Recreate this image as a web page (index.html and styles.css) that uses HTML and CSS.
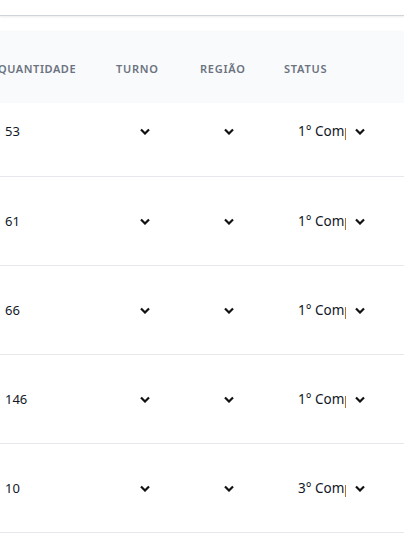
FILE: index.html
```html
<!DOCTYPE html>
<html lang="pt-BR">
<head>
<meta charset="utf-8">
<link rel="stylesheet" href="styles.css">
</head>
<body>
<div class="topcard"></div>
<div class="card">
  <div class="row head">
    <div class="c c1"><span class="h h1">Quantidade</span></div>
    <div class="c c2"><span class="h">Turno</span></div>
    <div class="c c3"><span class="h">Região</span></div>
    <div class="c c4"><span class="h">Status</span></div>
  </div>
  <div class="row first">
    <div class="c c1 num">53</div>
    <div class="c c2"><div class="sel"><span class="val"></span><svg class="chev" viewBox="0 0 10 7"><polyline points="1,1.5 5,5.5 9,1.5"/></svg></div></div>
    <div class="c c3"><div class="sel"><span class="val"></span><svg class="chev" viewBox="0 0 10 7"><polyline points="1,1.5 5,5.5 9,1.5"/></svg></div></div>
    <div class="c c4"><div class="sel"><span class="val wide">1° Compulsório</span><svg class="chev" viewBox="0 0 10 7"><polyline points="1,1.5 5,5.5 9,1.5"/></svg></div></div>
  </div>
  <div class="row">
    <div class="c c1 num">61</div>
    <div class="c c2"><div class="sel"><span class="val"></span><svg class="chev" viewBox="0 0 10 7"><polyline points="1,1.5 5,5.5 9,1.5"/></svg></div></div>
    <div class="c c3"><div class="sel"><span class="val"></span><svg class="chev" viewBox="0 0 10 7"><polyline points="1,1.5 5,5.5 9,1.5"/></svg></div></div>
    <div class="c c4"><div class="sel"><span class="val wide">1° Compulsório</span><svg class="chev" viewBox="0 0 10 7"><polyline points="1,1.5 5,5.5 9,1.5"/></svg></div></div>
  </div>
  <div class="row">
    <div class="c c1 num">66</div>
    <div class="c c2"><div class="sel"><span class="val"></span><svg class="chev" viewBox="0 0 10 7"><polyline points="1,1.5 5,5.5 9,1.5"/></svg></div></div>
    <div class="c c3"><div class="sel"><span class="val"></span><svg class="chev" viewBox="0 0 10 7"><polyline points="1,1.5 5,5.5 9,1.5"/></svg></div></div>
    <div class="c c4"><div class="sel"><span class="val wide">1° Compulsório</span><svg class="chev" viewBox="0 0 10 7"><polyline points="1,1.5 5,5.5 9,1.5"/></svg></div></div>
  </div>
  <div class="row">
    <div class="c c1 num">146</div>
    <div class="c c2"><div class="sel"><span class="val"></span><svg class="chev" viewBox="0 0 10 7"><polyline points="1,1.5 5,5.5 9,1.5"/></svg></div></div>
    <div class="c c3"><div class="sel"><span class="val"></span><svg class="chev" viewBox="0 0 10 7"><polyline points="1,1.5 5,5.5 9,1.5"/></svg></div></div>
    <div class="c c4"><div class="sel"><span class="val wide">1° Compulsório</span><svg class="chev" viewBox="0 0 10 7"><polyline points="1,1.5 5,5.5 9,1.5"/></svg></div></div>
  </div>
  <div class="row last">
    <div class="c c1 num">10</div>
    <div class="c c2"><div class="sel"><span class="val"></span><svg class="chev" viewBox="0 0 10 7"><polyline points="1,1.5 5,5.5 9,1.5"/></svg></div></div>
    <div class="c c3"><div class="sel"><span class="val"></span><svg class="chev" viewBox="0 0 10 7"><polyline points="1,1.5 5,5.5 9,1.5"/></svg></div></div>
    <div class="c c4"><div class="sel"><span class="val wide">3° Compulsório</span><svg class="chev" viewBox="0 0 10 7"><polyline points="1,1.5 5,5.5 9,1.5"/></svg></div></div>
  </div>
</div>
</body>
</html>
```
FILE: styles.css
```css
* { box-sizing: border-box; }
html, body { margin: 0; padding: 0; background: #ffffff; }
body {
  font-family: "Noto Sans", "Open Sans", sans-serif;
  color: #111827;
  overflow: hidden;
}
.topcard {
  height: 16px;
  background: #fff;
  border-bottom: 1px solid #d1d5db;
  box-shadow: 0 1px 2px rgba(0, 0, 0, 0.08);
}
.card {
  margin-top: 15px;
  background: #fff;
  border-bottom: 1px solid #e5e7eb;
  box-shadow: 0 2px 3px rgba(0, 0, 0, 0.1), 0 1px 2px rgba(0, 0, 0, 0.06);
}
.row {
  display: flex;
  align-items: center;
  height: 89px;
  border-top: 1px solid #e5e7eb;
}
.row.head {
  height: 72px;
  background: #f9fafb;
  border-top: none;
  padding-bottom: 1px;
}
.row.first {
  height: 73px;
  border-top: none;
  padding-bottom: 17px;
}
.c { flex: none; }
.c1 { width: 116px; }
.c2 { width: 84px; }
.c3 { width: 84px; }
.c4 { flex: 1; }
.h {
  font-size: 11px;
  font-weight: 600;
  letter-spacing: 0.07em;
  text-transform: uppercase;
  color: #6b7280;
}
.h1 { margin-left: -2px; letter-spacing: 0.05em; }
.num {
  font-size: 13px;
  padding-left: 5px;
}
.sel {
  display: flex;
  align-items: center;
  padding-left: 14px;
  height: 28px;
}
.val {
  display: block;
  width: 0;
  overflow: hidden;
  white-space: nowrap;
  font-size: 13.5px;
}
.val.wide { width: 48px; }
.chev {
  width: 10px;
  height: 7px;
  margin-left: 10px;
  fill: none;
  stroke: #111;
  stroke-width: 2.2;
}
.val.wide + .chev { margin-left: 9px; }
```
